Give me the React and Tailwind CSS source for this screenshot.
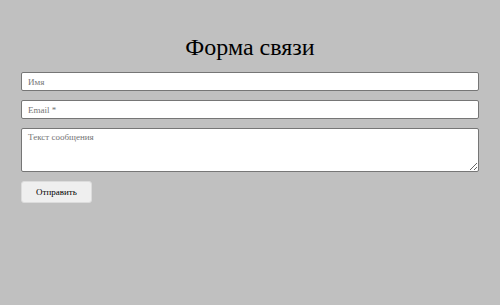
export default function App() {
  return (
    <div className="w-[500px] h-[305px] bg-[#c0c0c0] px-[21px] pt-[33px]" style={{ fontFamily: '"Liberation Serif", "Times New Roman", serif' }}>
      <h1 className="text-center text-[24px] leading-[28px] text-black h-[28px]">Форма связи</h1>
      <form className="flex flex-col mt-[11px]">
        <input
          type="text"
          placeholder="Имя"
          className="h-[19px] w-full bg-white border border-[#767676] rounded-[2px] px-[6px] text-[9px] placeholder:text-[#757575] outline-none"
        />
        <input
          type="text"
          placeholder="Email *"
          className="mt-[9px] h-[19px] w-full bg-white border border-[#767676] rounded-[2px] px-[6px] text-[9px] placeholder:text-[#757575] outline-none"
        />
        <textarea
          placeholder="Текст сообщения"
          className="mt-[9px] h-[44px] w-full bg-white border border-[#767676] rounded-[2px] px-[6px] py-[3px] text-[9px] leading-[11px] placeholder:text-[#757575] outline-none"
        />
        <div className="mt-[9px] flex">
          <button type="button" className="w-[71px] h-[22px] bg-[#efefef] border border-[#dcdcdc] rounded-[3px] text-[9px] leading-[20px] text-black">
            Отправить
          </button>
        </div>
      </form>
    </div>
  );
}
